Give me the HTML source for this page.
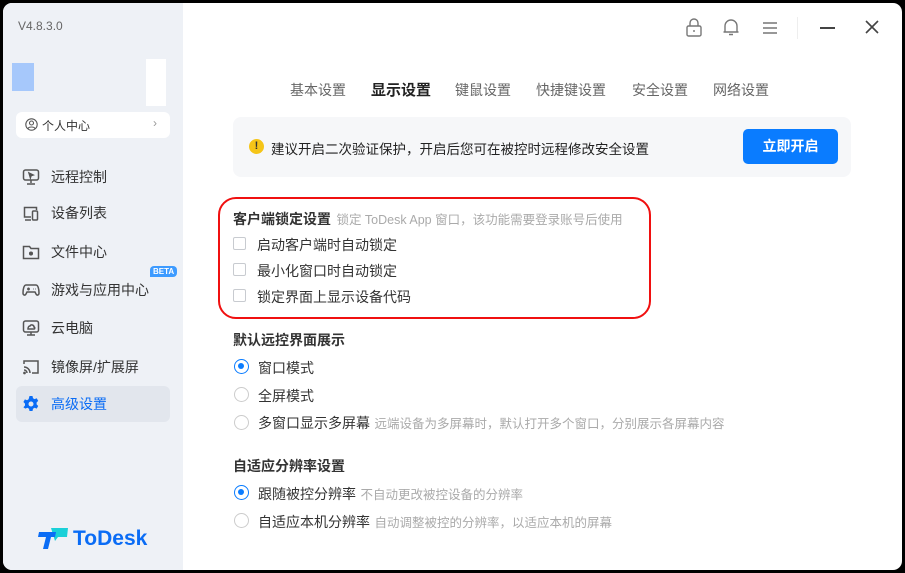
<!DOCTYPE html>
<html><head><meta charset="utf-8"><style>
*{margin:0;padding:0;box-sizing:border-box}
body{width:905px;height:573px;background:#000;font-family:"Liberation Sans","Noto Sans CJK SC",sans-serif;position:relative;overflow:hidden}
.win{position:absolute;left:3px;top:3px;width:899px;height:567px;background:#fff;border-radius:9px;overflow:hidden}
.side{position:absolute;left:0;top:0;width:180px;height:567px;background:#eef1f6}
.a{position:absolute;white-space:nowrap}
.nav{position:absolute;left:13px;width:154px;height:36px;font-size:14px;color:#333;display:flex;align-items:center}
.nav svg{position:absolute;left:6px}
.nav span{position:absolute;left:35px}
.tab{position:absolute;top:77px;font-size:14px;color:#666}
.cb{position:absolute;left:230px;width:13px;height:13px;border:1px solid #c8cbd0;border-radius:2px;background:#fff}
.rd{position:absolute;left:231px;width:15px;height:15px;border:1px solid #ccc;border-radius:50%}
.rd.on{border:1.5px solid #0a7cff}
.rd.on::after{content:"";position:absolute;left:3px;top:3px;width:6px;height:6px;border-radius:50%;background:#0a7cff}
.t{font-size:14px;color:#333}
.g{font-size:12.5px;color:#aaa}
</style></head><body>
<div class="win">
<div class="side">
<div class="a" style="left:15px;top:16px;font-size:12px;color:#666">V4.8.3.0</div>
<div class="a" style="left:9px;top:60px;width:22px;height:28px;background:#a6c8fb"></div>
<div class="a" style="left:143px;top:56px;width:20px;height:47px;background:#fff"></div>
<div class="a" style="left:13px;top:109px;width:154px;height:26px;background:#fff;border-radius:6px"></div>
<svg class="a" style="left:22px;top:115px" width="13" height="13" viewBox="0 0 13 13" fill="none" stroke="#555" stroke-width="1.1"><circle cx="6.5" cy="6.5" r="5.7"/><circle cx="6.5" cy="5" r="2"/><path d="M3 10.5c1-2 6-2 7 0"/></svg>
<div class="a" style="left:39px;top:114px;font-size:12px;color:#333">个人中心</div>
<div class="a" style="left:150px;top:113px;font-size:12px;color:#999">›</div>
<div class="nav" style="top:156px"><svg width="18" height="18" viewBox="0 0 18 18" fill="none" stroke="#555" stroke-width="1.5"><rect x="1.5" y="2" width="15" height="10" rx="2"/><path d="M9 12v3M5 16h8"/><path d="M7 5l4 2-2 .6-.6 2z" fill="#555"/></svg><span>远程控制</span></div>
<div class="nav" style="top:192px"><svg width="18" height="18" viewBox="0 0 18 18" fill="none" stroke="#555" stroke-width="1.5"><path d="M9 13H2.5V3.5h12V6"/><path d="M3 16h6"/><rect x="10.5" y="7" width="5" height="9" rx="1"/></svg><span>设备列表</span></div>
<div class="nav" style="top:231px"><svg width="18" height="18" viewBox="0 0 18 18" fill="none" stroke="#555" stroke-width="1.5"><path d="M1.5 3.5h6l1.5 2h7.5v10h-15z"/><circle cx="9" cy="10.5" r="1.3" fill="#555"/></svg><span>文件中心</span></div>
<div class="a" style="left:147px;top:263px;font-size:8px;color:#fff;background:#3d9bff;border-radius:4px 4px 4px 0;padding:1px 3px;font-weight:bold">BETA</div>
<div class="nav" style="top:269px"><svg width="18" height="18" viewBox="0 0 18 18" fill="none" stroke="#555" stroke-width="1.5"><path d="M4 4h10c2 0 3 4 3 8 0 2-2 3-3 1l-1-2H5l-1 2c-1 2-3 1-3-1 0-4 1-8 3-8z"/><path d="M5 8h3M6.5 6.5v3M11 8h.5M13 8h.5"/></svg><span>游戏与应用中心</span></div>
<div class="nav" style="top:307px"><svg width="18" height="18" viewBox="0 0 18 18" fill="none" stroke="#555" stroke-width="1.5"><rect x="1.5" y="2" width="15" height="11" rx="2"/><path d="M5 16h8M9 13v3"/><path d="M6 10h6c1 0 1-2 0-2 0-2-3-3-4-1-2 0-2 3-2 3z"/></svg><span>云电脑</span></div>
<div class="nav" style="top:346px"><svg width="18" height="18" viewBox="0 0 18 18" fill="none" stroke="#555" stroke-width="1.5"><path d="M2 6V3h14v12h-6"/><path d="M2 9a6 6 0 0 1 6 6M2 12a3 3 0 0 1 3 3"/><circle cx="2.5" cy="15" r=".6" fill="#555"/></svg><span>镜像屏/扩展屏</span></div>
<div class="a" style="left:13px;top:383px;width:154px;height:36px;background:#e2e6ed;border-radius:6px"></div>
<div class="nav" style="top:383px;color:#0a6cf5"><svg width="18" height="18" viewBox="0 0 18 18"><path fill="#0a6cf5" d="M7.5 1h3l.5 2.2 1.6.9 2.1-.8 1.5 2.6-1.6 1.6v1.9l1.6 1.6-1.5 2.6-2.1-.8-1.6.9-.5 2.3h-3l-.5-2.3-1.6-.9-2.1.8L1.4 12.2 3 10.5V8.6L1.4 7l1.5-2.6 2.1.8 1.6-.9z"/><circle cx="9" cy="9" r="2.5" fill="#e2e6ed"/></svg><span>高级设置</span></div>
<svg class="a" style="left:35px;top:525px" width="32" height="22" viewBox="0 0 32 22"><path d="M13 0h17l-1 9h-9l-3 4z" fill="#1ad0d8"/><path d="M1 4h17l-1 5h-4l-3 12H5l3-12H0z" fill="#0a6cf5"/></svg>
<div class="a" style="left:70px;top:524px;font-size:21px;font-weight:bold;color:#0a6cf5">ToDesk</div>
</div>
<svg class="a" style="left:682px;top:15px" width="18" height="20" viewBox="0 0 18 20" fill="none" stroke="#777" stroke-width="1.4"><rect x="2" y="8" width="14" height="10" rx="1.5"/><path d="M5 8V5a4 4 0 0 1 8 0v3M9 12v2"/></svg>
<svg class="a" style="left:719px;top:14px" width="18" height="20" viewBox="0 0 18 20" fill="none" stroke="#777" stroke-width="1.4"><path d="M3 15V9a6 6 0 0 1 12 0v6zM1.5 15h15M7 17.5h4"/></svg>
<svg class="a" style="left:759px;top:18px" width="16" height="14" viewBox="0 0 16 14" stroke="#777" stroke-width="1.4"><path d="M1 2h14M1 7h14M1 12h14"/></svg>
<div class="a" style="left:794px;top:14px;width:1px;height:22px;background:#eee"></div>
<div class="a" style="left:817px;top:24px;width:15px;height:1.6px;background:#444"></div>
<svg class="a" style="left:862px;top:17px" width="14" height="14" viewBox="0 0 14 14" stroke="#444" stroke-width="1.6"><path d="M1 1l12 12M13 1L1 13"/></svg>
<div class="tab" style="left:287px">基本设置</div>
<div class="tab" style="left:368px;color:#222;font-weight:bold;font-size:15px;top:76px">显示设置</div>
<div class="tab" style="left:452px">键鼠设置</div>
<div class="tab" style="left:533px">快捷键设置</div>
<div class="tab" style="left:629px">安全设置</div>
<div class="tab" style="left:710px">网络设置</div>
<div class="a" style="left:230px;top:114px;width:618px;height:60px;background:#f6f7f9;border-radius:8px"></div>
<div class="a" style="left:246px;top:136px;width:15px;height:15px;border-radius:50%;background:#f5c518;font-size:11px;font-weight:bold;text-align:center;line-height:15px;color:#333">!</div>
<div class="a" style="left:268px;top:135px;font-size:13.5px;color:#222">建议开启二次验证保护，开启后您可在被控时远程修改安全设置</div>
<div class="a" style="left:740px;top:126px;width:95px;height:35px;background:#0a7cff;border-radius:5px;color:#fff;font-size:14px;font-weight:bold;text-align:center;line-height:35px">立即开启</div>
<div class="a" style="left:215px;top:194px;width:433px;height:122px;border:2.2px solid #f01010;border-radius:18px"></div>
<div class="a" style="left:230px;top:206px"><span class="t" style="font-weight:bold">客户端锁定设置</span> <span class="g" style="margin-left:1px">锁定 ToDesk App 窗口，该功能需要登录账号后使用</span></div>
<div class="cb" style="top:234px"></div><div class="a t" style="left:254px;top:232px">启动客户端时自动锁定</div>
<div class="cb" style="top:260px"></div><div class="a t" style="left:254px;top:258px">最小化窗口时自动锁定</div>
<div class="cb" style="top:286px"></div><div class="a t" style="left:254px;top:284px">锁定界面上显示设备代码</div>
<div class="a t" style="left:230px;top:327px;font-weight:bold">默认远控界面展示</div>
<div class="rd on" style="top:356px"></div><div class="a t" style="left:255px;top:355px">窗口模式</div>
<div class="rd" style="top:384px"></div><div class="a t" style="left:255px;top:383px">全屏模式</div>
<div class="rd" style="top:412px"></div><div class="a" style="left:255px;top:410px"><span class="t">多窗口显示多屏幕</span> <span class="g">远端设备为多屏幕时，默认打开多个窗口，分别展示各屏幕内容</span></div>
<div class="a t" style="left:230px;top:453px;font-weight:bold">自适应分辨率设置</div>
<div class="rd on" style="top:482px"></div><div class="a" style="left:255px;top:481px"><span class="t">跟随被控分辨率</span> <span class="g">不自动更改被控设备的分辨率</span></div>
<div class="rd" style="top:510px"></div><div class="a" style="left:255px;top:509px"><span class="t">自适应本机分辨率</span> <span class="g">自动调整被控的分辨率，以适应本机的屏幕</span></div>
</div>
</body></html>
